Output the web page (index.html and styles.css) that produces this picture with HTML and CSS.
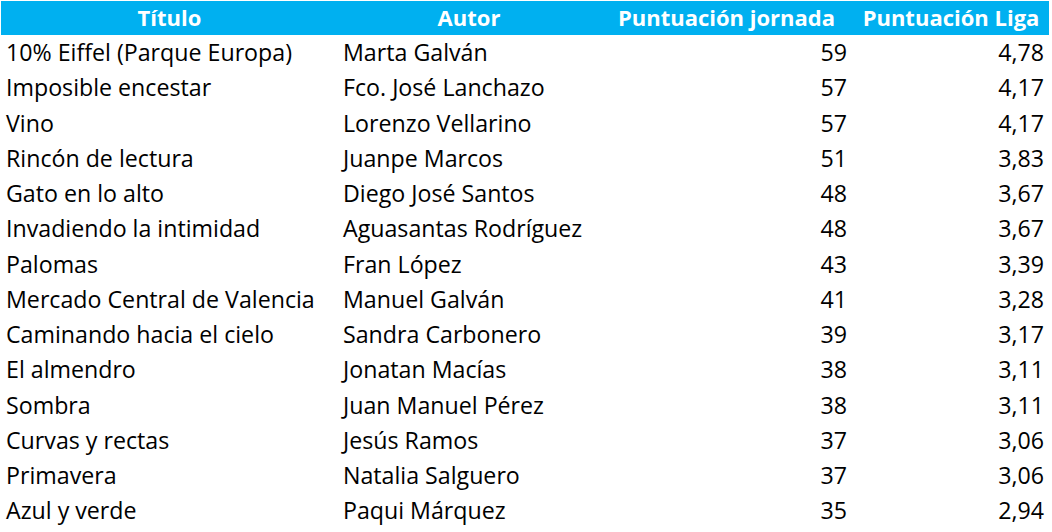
FILE: index.html
```html
<!DOCTYPE html>
<html lang="es">
<head>
<meta charset="utf-8">
<title>Clasificación</title>
<link rel="stylesheet" href="styles.css">
</head>
<body>
<div class="sheet">
  <div class="row head">
    <div class="c c1">Título</div>
    <div class="c c2">Autor</div>
    <div class="c c3">Puntuación jornada</div>
    <div class="c c4">Puntuación Liga</div>
  </div>
  <div class="row"><div class="c c1">10% Eiffel (Parque Europa)</div><div class="c c2">Marta Galván</div><div class="c c3 num">59</div><div class="c c4 num">4,78</div></div>
  <div class="row"><div class="c c1">Imposible encestar</div><div class="c c2">Fco. José Lanchazo</div><div class="c c3 num">57</div><div class="c c4 num">4,17</div></div>
  <div class="row"><div class="c c1">Vino</div><div class="c c2">Lorenzo Vellarino</div><div class="c c3 num">57</div><div class="c c4 num">4,17</div></div>
  <div class="row"><div class="c c1">Rincón de lectura</div><div class="c c2">Juanpe Marcos</div><div class="c c3 num">51</div><div class="c c4 num">3,83</div></div>
  <div class="row"><div class="c c1">Gato en lo alto</div><div class="c c2">Diego José Santos</div><div class="c c3 num">48</div><div class="c c4 num">3,67</div></div>
  <div class="row"><div class="c c1">Invadiendo la intimidad</div><div class="c c2">Aguasantas Rodríguez</div><div class="c c3 num">48</div><div class="c c4 num">3,67</div></div>
  <div class="row"><div class="c c1">Palomas</div><div class="c c2">Fran López</div><div class="c c3 num">43</div><div class="c c4 num">3,39</div></div>
  <div class="row"><div class="c c1">Mercado Central de Valencia</div><div class="c c2">Manuel Galván</div><div class="c c3 num">41</div><div class="c c4 num">3,28</div></div>
  <div class="row"><div class="c c1">Caminando hacia el cielo</div><div class="c c2">Sandra Carbonero</div><div class="c c3 num">39</div><div class="c c4 num">3,17</div></div>
  <div class="row"><div class="c c1">El almendro</div><div class="c c2">Jonatan Macías</div><div class="c c3 num">38</div><div class="c c4 num">3,11</div></div>
  <div class="row"><div class="c c1">Sombra</div><div class="c c2">Juan Manuel Pérez</div><div class="c c3 num">38</div><div class="c c4 num">3,11</div></div>
  <div class="row"><div class="c c1">Curvas y rectas</div><div class="c c2">Jesús Ramos</div><div class="c c3 num">37</div><div class="c c4 num">3,06</div></div>
  <div class="row"><div class="c c1">Primavera</div><div class="c c2">Natalia Salguero</div><div class="c c3 num">37</div><div class="c c4 num">3,06</div></div>
  <div class="row"><div class="c c1">Azul y verde</div><div class="c c2">Paqui Márquez</div><div class="c c3 num">35</div><div class="c c4 num">2,94</div></div>
</div>
</body>
</html>
```

FILE: styles.css
```css
html, body {
  margin: 0;
  padding: 0;
  background: #ffffff;
}

.sheet {
  padding: 1px 0 0 1px;
  width: 1048px;
  font-family: "Open Sans", "Lato", sans-serif;
  font-size: 23.2px;
  color: #000000;
}

.row {
  box-sizing: border-box;
  display: grid;
  grid-template-columns: 337px 262px 253px 196px;
  height: 35.25px;
  padding-bottom: 3px;
  align-items: center;
}

.row.head {
  height: 34px;
  padding-bottom: 2px;
  background: #00b0f0;
  color: #ffffff;
  font-size: 22px;
  font-weight: 700;
  margin-bottom: 1px;
}

.c {
  white-space: nowrap;
  padding: 0 5px;
  line-height: 30px;
}

.head .c {
  text-align: center;
  padding: 0;
}

.num {
  text-align: right;
  padding-right: 6px;
}

.c4.num {
  padding-right: 5px;
}
```
